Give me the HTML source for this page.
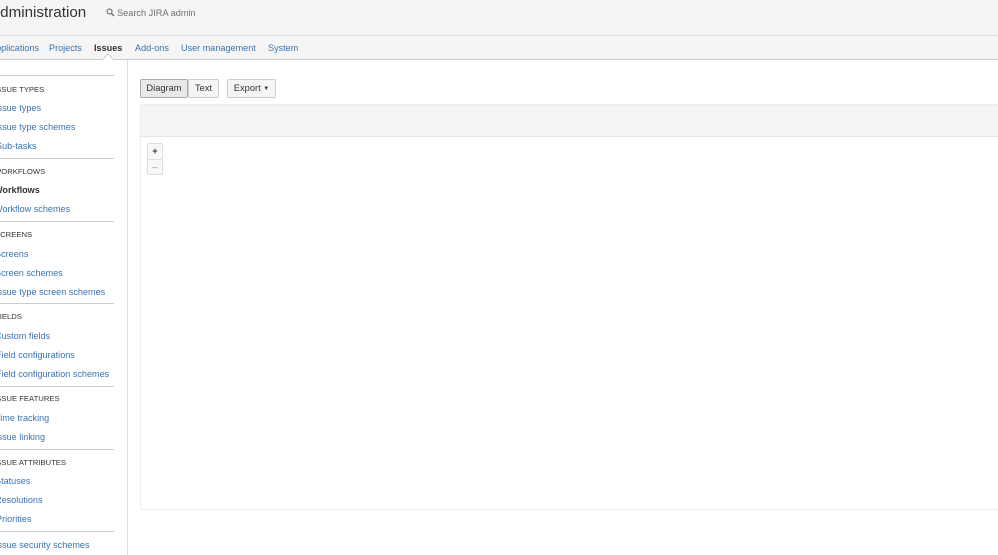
<!DOCTYPE html><html><head><style>
body{margin:0;width:998px;height:555px;overflow:hidden;background:#fff;font-family:"Liberation Sans",Arial,sans-serif;position:relative}
.a{position:absolute;white-space:nowrap}
.l{color:#3b73af;font-size:9.1px}
.h{color:#333;font-size:7.7px}
.sep{position:absolute;left:0;width:114px;height:1px;background:#ccc}
.btn{position:absolute;height:17px;border:1px solid #ccc;background:#f5f5f5;font-size:9.3px;color:#333;line-height:17px;text-align:center;box-sizing:content-box;border-radius:2px}
</style></head><body>
<div class="a" style="left:0;top:0;width:998px;height:35px;background:#f5f5f5;border-bottom:1px solid #ddd"></div>
<div class="a" style="left:-10px;top:4px;font-size:15.2px;color:#333">Administration</div>
<svg class="a" style="left:106px;top:8px" width="9" height="9" viewBox="0 0 9 9"><circle cx="3.5" cy="3.5" r="2.5" fill="none" stroke="#777" stroke-width="1.2"/><line x1="5.3" y1="5.3" x2="8" y2="8" stroke="#777" stroke-width="1.5"/></svg>
<div class="a" style="left:117px;top:8px;font-size:9.2px;color:#707070">Search JIRA admin</div>
<div class="a" style="left:0;top:36px;width:998px;height:23px;background:#f5f5f5;border-bottom:1px solid #ccc"></div>
<div class="a l" style="left:-10px;top:43px">Applications</div>
<div class="a l" style="left:49px;top:43px">Projects</div>
<div class="a" style="left:94px;top:43px;font-size:9.1px;font-weight:bold;color:#333">Issues</div>
<div class="a l" style="left:135px;top:43px">Add-ons</div>
<div class="a l" style="left:181px;top:43px">User management</div>
<div class="a l" style="left:268px;top:43px">System</div>
<div class="a" style="left:104px;top:55px;width:7px;height:7px;background:#fff;border-left:1px solid #ccc;border-top:1px solid #ccc;transform:rotate(45deg)"></div>
<div class="a" style="left:127px;top:60px;width:1px;height:495px;background:#ddd"></div>
<div class="sep" style="top:75px"></div>
<div class="a h" style="left:-6px;top:85px">ISSUE TYPES</div>
<div class="a l" style="left:-5px;top:103px">Issue types</div>
<div class="a l" style="left:-5px;top:122px">Issue type schemes</div>
<div class="a l" style="left:-4px;top:141px">Sub-tasks</div>
<div class="sep" style="top:158px"></div>
<div class="a h" style="left:-6px;top:167px">WORKFLOWS</div>
<div class="a" style="left:-6px;top:185px;font-size:9.1px;font-weight:bold;color:#333">Workflows</div>
<div class="a l" style="left:-6px;top:204px">Workflow schemes</div>
<div class="sep" style="top:221px"></div>
<div class="a h" style="left:-5px;top:230px">SCREENS</div>
<div class="a l" style="left:-5px;top:249px">Screens</div>
<div class="a l" style="left:-5px;top:268px">Screen schemes</div>
<div class="a l" style="left:-5px;top:287px">Issue type screen schemes</div>
<div class="sep" style="top:303px"></div>
<div class="a h" style="left:-5px;top:312px">FIELDS</div>
<div class="a l" style="left:-5px;top:331px">Custom fields</div>
<div class="a l" style="left:-4px;top:350px">Field configurations</div>
<div class="a l" style="left:-4px;top:369px">Field configuration schemes</div>
<div class="sep" style="top:386px"></div>
<div class="a h" style="left:-6px;top:394px">ISSUE FEATURES</div>
<div class="a l" style="left:-5px;top:413px">Time tracking</div>
<div class="a l" style="left:-5px;top:432px">Issue linking</div>
<div class="sep" style="top:449px"></div>
<div class="a h" style="left:-6px;top:458px">ISSUE ATTRIBUTES</div>
<div class="a l" style="left:-5px;top:476px">Statuses</div>
<div class="a l" style="left:-5px;top:495px">Resolutions</div>
<div class="a l" style="left:-4px;top:514px">Priorities</div>
<div class="sep" style="top:531px"></div>
<div class="a l" style="left:-5px;top:540px">Issue security schemes</div>
<div class="btn" style="left:140px;top:79px;width:46px;background:#e9e9e9;border-color:#aaa">Diagram</div>
<div class="btn" style="left:188px;top:79px;width:29px;background:#f5f5f5">Text</div>
<div class="btn" style="left:227px;top:79px;width:47px">Export <span style="font-size:6px;vertical-align:1px">▼</span></div>
<div class="a" style="left:140px;top:104px;width:860px;height:404px;border:1px solid #eee;border-right:none"></div>
<div class="a" style="left:141px;top:105px;width:857px;height:31px;background:#f4f4f4;border-bottom:1px solid #e5e5e5"></div>
<div class="btn" style="left:147px;top:143px;width:14px;height:15px;line-height:15px;font-weight:bold;background:#f8f8f8;border-color:#ddd">+</div>
<div class="btn" style="left:147px;top:159px;width:14px;height:14px;line-height:14px;color:#888;background:#f8f8f8;border-color:#ddd">–</div>
</body></html>
